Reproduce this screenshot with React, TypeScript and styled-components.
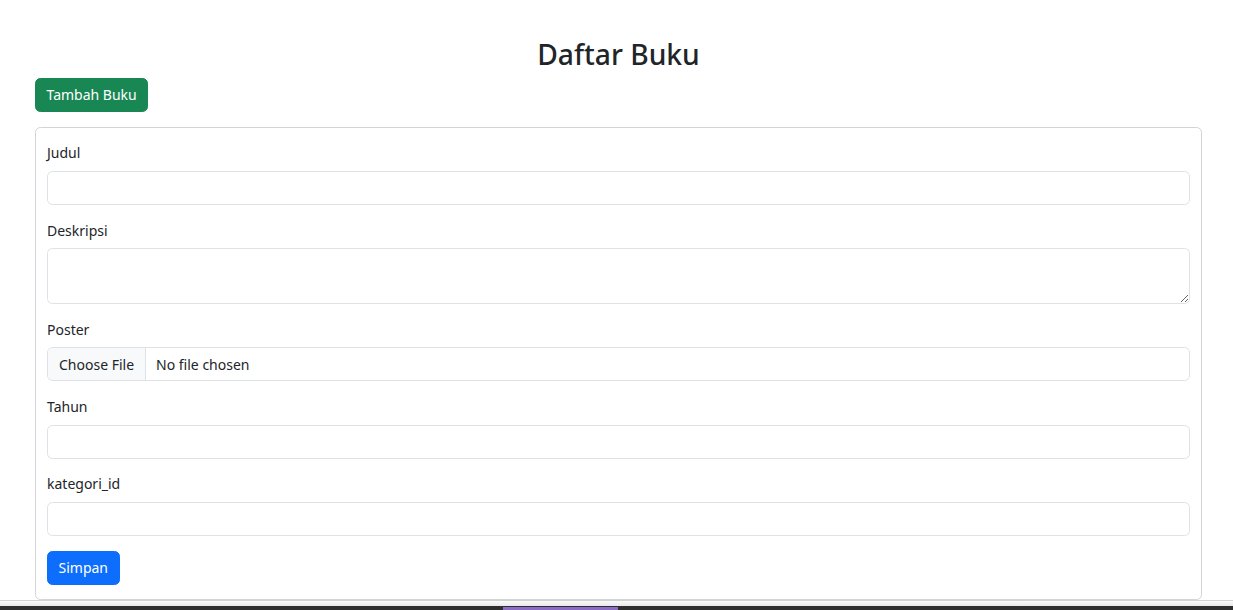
import React from "react";
import styled, { createGlobalStyle } from "styled-components";

const Global = createGlobalStyle`
  html, body { margin: 0; padding: 0; background: #fff; }
  body {
    font-family: "Noto Sans", "Open Sans", sans-serif;
    font-size: 14px;
    line-height: 1.5;
    color: #212529;
  }
  * { box-sizing: border-box; }
`;

const Page = styled.main`
  margin: 0 31px 0 35px;
  padding-top: 37px;
`;

const Title = styled.h2`
  margin: 0 0 7px;
  font-size: 28.2px;
  line-height: 34px;
  font-weight: 500;
  text-align: center;
`;

const Button = styled.button<{ $variant: "success" | "primary" }>`
  display: block;
  height: 34.2px;
  padding: 0 10.5px;
  border: 1px solid ${(p) => (p.$variant === "success" ? "#198754" : "#0d6efd")};
  background: ${(p) => (p.$variant === "success" ? "#198754" : "#0d6efd")};
  color: #fff;
  font: inherit;
  font-size: 14px;
  line-height: 1;
  border-radius: 5.4px;
  cursor: pointer;
`;

const Card = styled.form`
  margin-top: 14.8px;
  border: 1px solid #d3d4d5;
  border-radius: 5.4px;
  padding: 14.2px 11px 14.4px;
`;

const Field = styled.div`
  margin-bottom: 14.4px;
`;

const Label = styled.label`
  display: block;
  margin-bottom: 7.2px;
  line-height: 21.6px;
`;

const Input = styled.input`
  display: block;
  width: 100%;
  height: 34.2px;
  padding: 0 11px;
  border: 1px solid #dee2e6;
  border-radius: 5.4px;
  font: inherit;
  color: #212529;
  background: #fff;
  outline: none;
`;

const TextArea = styled.textarea`
  display: block;
  width: 100%;
  height: 55.8px;
  padding: 5px 11px;
  border: 1px solid #dee2e6;
  border-radius: 5.4px;
  font: inherit;
  color: #212529;
  resize: vertical;
  outline: none;
`;

const FileBox = styled.div`
  display: flex;
  align-items: stretch;
  height: 34.2px;
  border: 1px solid #dee2e6;
  border-radius: 5.4px;
  overflow: hidden;
`;

const FileButton = styled.span`
  display: flex;
  align-items: center;
  padding: 0 11px;
  background: #f8f9fa;
  border-right: 1px solid #dee2e6;
`;

const FileName = styled.span`
  display: flex;
  align-items: center;
  padding: 0 10px;
`;

const Taskbar = styled.div`
  position: fixed;
  left: 0;
  right: 0;
  bottom: 0;
  height: 10px;
  border-top: 1px solid #d2d2d2;
  background: linear-gradient(#fafafa, #e9e9e9 5px, #2e2e2e 5px);
`;

const TaskItem = styled.div`
  position: absolute;
  left: 503px;
  width: 115px;
  bottom: 0;
  height: 3px;
  background: #8c6bc4;
`;

export default function App() {
  return (
    <>
      <Global />
      <Page>
        <Title>Daftar Buku</Title>
        <Button $variant="success" type="button">Tambah Buku</Button>
        <Card onSubmit={(e) => e.preventDefault()}>
          <Field>
            <Label htmlFor="judul">Judul</Label>
            <Input id="judul" type="text" />
          </Field>
          <Field>
            <Label htmlFor="deskripsi">Deskripsi</Label>
            <TextArea id="deskripsi" rows={2} />
          </Field>
          <Field>
            <Label>Poster</Label>
            <FileBox>
              <FileButton>Choose File</FileButton>
              <FileName>No file chosen</FileName>
            </FileBox>
          </Field>
          <Field>
            <Label htmlFor="tahun">Tahun</Label>
            <Input id="tahun" type="text" />
          </Field>
          <Field>
            <Label htmlFor="kategori">kategori_id</Label>
            <Input id="kategori" type="text" />
          </Field>
          <Button $variant="primary" type="submit">Simpan</Button>
        </Card>
      </Page>
      <Taskbar>
        <TaskItem />
      </Taskbar>
    </>
  );
}
